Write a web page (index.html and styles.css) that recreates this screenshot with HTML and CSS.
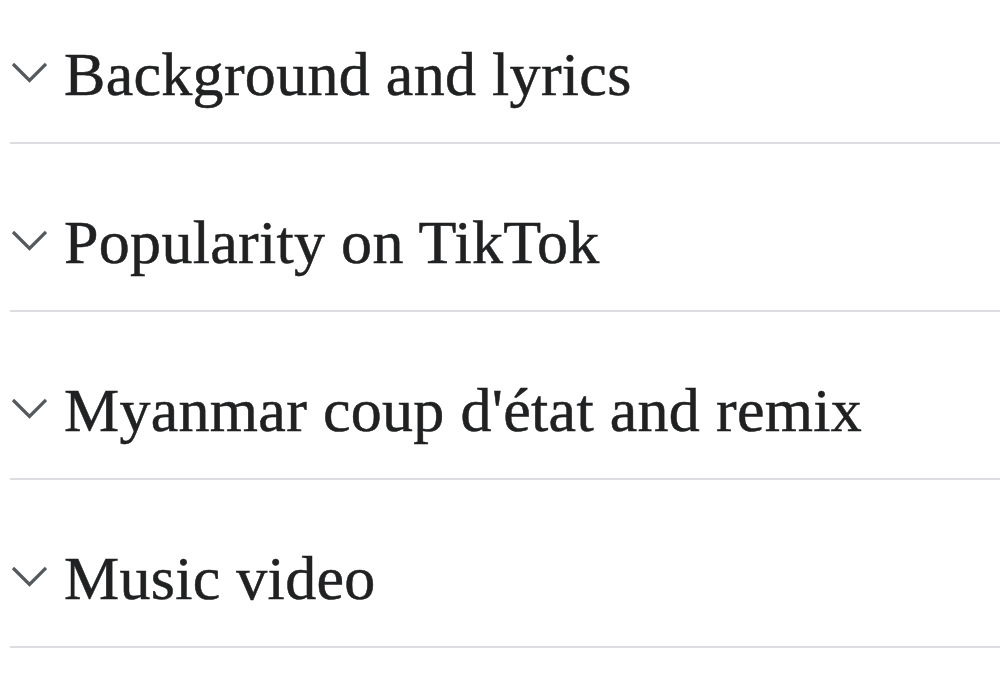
FILE: index.html
```html
<!DOCTYPE html>
<html>
<head>
<meta charset="utf-8">
<link rel="stylesheet" href="styles.css">
</head>
<body>
<div class="sections">
  <div class="section">
    <svg class="chev" width="36" height="22" viewBox="0 0 36 22"><polyline points="2,2 18.5,18.5 35,2" fill="none" stroke="#54595d" stroke-width="3.2"/></svg>
    <h2>Background and lyrics</h2>
  </div>
  <div class="section">
    <svg class="chev" width="36" height="22" viewBox="0 0 36 22"><polyline points="2,2 18.5,18.5 35,2" fill="none" stroke="#54595d" stroke-width="3.2"/></svg>
    <h2>Popularity on TikTok</h2>
  </div>
  <div class="section">
    <svg class="chev" width="36" height="22" viewBox="0 0 36 22"><polyline points="2,2 18.5,18.5 35,2" fill="none" stroke="#54595d" stroke-width="3.2"/></svg>
    <h2>Myanmar coup d'état and remix</h2>
  </div>
  <div class="section">
    <svg class="chev" width="36" height="22" viewBox="0 0 36 22"><polyline points="2,2 18.5,18.5 35,2" fill="none" stroke="#54595d" stroke-width="3.2"/></svg>
    <h2>Music video</h2>
  </div>
</div>
</body>
</html>
```

FILE: styles.css
```css
html, body {
  margin: 0;
  padding: 0;
  background: #ffffff;
}
body {
  width: 1000px;
  height: 690px;
  overflow: hidden;
}
.sections {
  margin-left: 10px;
  margin-top: -24px;
}
.section {
  height: 166px;
  border-bottom: 2px solid #dcdde0;
  display: flex;
  align-items: flex-start;
}
.chev {
  margin-top: 86px;
  margin-left: 1px;
  margin-right: 17px;
  flex: none;
}
h2 {
  margin: 0;
  margin-top: 62px;
  font-family: "Liberation Serif", serif;
  font-weight: normal;
  font-size: 62px;
  line-height: 72px;
  letter-spacing: 0.3px;
  color: #202122;
  -webkit-text-stroke: 0.5px #202122;
  white-space: nowrap;
}
```
